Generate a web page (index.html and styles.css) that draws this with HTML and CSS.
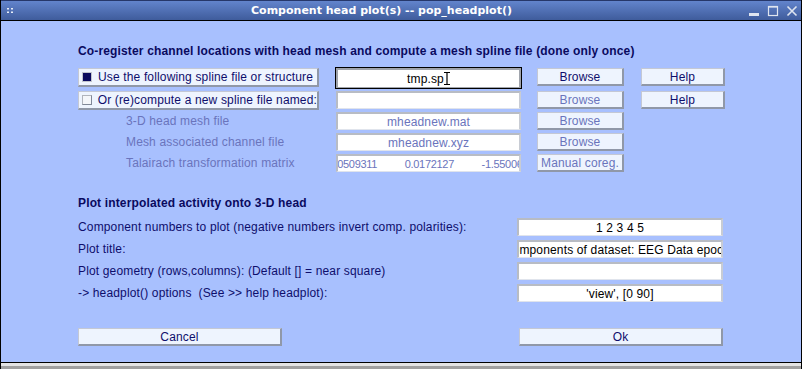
FILE: index.html
```html
<!DOCTYPE html>
<html lang="en">
<head>
    <meta charset="UTF-8">
    <title>Component head plot(s) -- pop_headplot()</title>
    <link rel="stylesheet" href="styles.css">
</head>
<body>
    <div class="window">
        <div class="titlebar">
            <svg class="grip" width="8" height="6" viewBox="0 0 8 6">
                <rect x="0" y="0" width="2" height="1.5" fill="#e8eef8"/>
                <rect x="4" y="0" width="2" height="1.5" fill="#e8eef8"/>
                <rect x="0" y="3.5" width="2" height="1.5" fill="#e8eef8"/>
                <rect x="4" y="3.5" width="2" height="1.5" fill="#e8eef8"/>
            </svg>
            <div class="title">Component head plot(s) -- pop_headplot()</div>
            <div class="controls">
                <svg width="12" height="12" viewBox="0 0 12 12"><rect x="1" y="8" width="10" height="3" fill="#dfe5f0"/></svg>
                <svg width="12" height="12" viewBox="0 0 12 12"><rect x="1.5" y="1.5" width="9" height="9" fill="none" stroke="#dfe5f0" stroke-width="1.2"/><rect x="1" y="1" width="10" height="1.6" fill="#dfe5f0"/></svg>
                <svg width="12" height="12" viewBox="0 0 12 12"><path d="M1.5 1.5 L10.5 10.5 M10.5 1.5 L1.5 10.5" stroke="#dfe5f0" stroke-width="1.6"/></svg>
            </div>
        </div>

        <div class="content">
            <div class="heading">Co-register channel locations with head mesh and compute a mesh spline file (done only once)</div>

            <div class="coreg">
                <div class="check"><span class="box on"></span>Use the following spline file or structure</div>
                <div class="edit focus">tmp.sp<svg class="ibeam" width="6" height="13" viewBox="0 0 6 13"><path d="M0 0.5 H6 M0 12.5 H6 M3 0.5 V12.5" stroke="#000" stroke-width="1.2"/></svg></div>
                <div class="btn">Browse</div>
                <div class="btn">Help</div>

                <div class="check"><span class="box"></span>Or (re)compute a new spline file named:</div>
                <div class="edit"></div>
                <div class="btn off">Browse</div>
                <div class="btn">Help</div>

                <div class="label off">3-D head mesh file</div>
                <div class="edit off">mheadnew.mat</div>
                <div class="btn off">Browse</div>
                <div></div>

                <div class="label off">Mesh associated channel file</div>
                <div class="edit off">mheadnew.xyz</div>
                <div class="btn off">Browse</div>
                <div></div>

                <div class="label off">Talairach transformation matrix</div>
                <div class="edit off matrix"><span>0.0509311          0.0172127          -1.550061</span></div>
                <div class="btn off">Manual coreg.</div>
                <div></div>
            </div>

            <div class="heading second">Plot interpolated activity onto 3-D head</div>

            <div class="plot">
                <div class="label">Component numbers to plot (negative numbers invert comp. polarities):</div>
                <div class="edit">1 2 3 4 5</div>
                <div class="label">Plot title:</div>
                <div class="edit"><span>Components of dataset: EEG Data epochs</span></div>
                <div class="label">Plot geometry (rows,columns): (Default [] = near square)</div>
                <div class="edit"></div>
                <div class="label">-&gt; headplot() options&nbsp;&nbsp;(See &gt;&gt; help headplot):</div>
                <div class="edit">'view', [0 90]</div>
            </div>

            <div class="actions">
                <div class="btn wide">Cancel</div>
                <div class="btn wide">Ok</div>
            </div>
        </div>
        <div class="bottom"></div>
    </div>
</body>
</html>
```

FILE: styles.css
```css
body{
    margin: 0;
    background-color: #a8c0fe;
    font-family: "Liberation Sans", Arial, sans-serif;
    font-size: 12px;
    letter-spacing: 0.15px;
    color: #0e0e6c;
}
.window{
    width: 802px;
    height: 369px;
    box-sizing: border-box;
    border-left: 1px solid #000;
    border-right: 1px solid #000;
    display: flex;
    flex-direction: column;
    overflow: hidden;
}
.titlebar{
    box-sizing: border-box;
    border-top: 1px solid #26376a;
    border-bottom: 1px solid #000;
    height: 21px;
    background: linear-gradient(#6284cc, #3f5c9c);
    display: flex;
    align-items: center;
    color: white;
}
.grip{
    margin-left: 6px;
    margin-top: 1px;
}
.title{
    flex: 1;
    text-align: center;
    font-family: "DejaVu Sans", sans-serif;
    font-weight: bold;
    font-size: 11px;
    letter-spacing: 0;
}
.controls{
    display: flex;
    gap: 7px;
    margin-right: 3px;
}
.content{
    flex: 1;
    padding: 23px 0 0 77px;
}
.heading{
    font-weight: bold;
    line-height: 14px;
    height: 14px;
    color: #0a0a5e;
    white-space: nowrap;
}
.heading.second{
    margin-top: 24px;
}
.coreg{
    margin-top: 10px;
    display: grid;
    grid-template-columns: 241px 185px 86px 84px;
    grid-template-rows: 20px 18px 18px 18px 18px;
    column-gap: 17px;
    row-gap: 3px;
}
.coreg > .btn:nth-child(4n+3){
    margin-left: -1px;
}
.check{
    background: #eef4fe;
    border-top: 1px solid #c4c8d4;
    border-left: 1px solid #c4c8d4;
    border-right: 2px solid #9098a8;
    border-bottom: 2px solid #9098a8;
    display: flex;
    align-items: center;
    white-space: nowrap;
    height: 19px;
    box-sizing: border-box;
}
.box{
    width: 8px;
    height: 8px;
    border: 1px solid #b0b4bc;
    border-right-color: #808898;
    border-bottom-color: #808898;
    background: #f4f6fa;
    margin: 0 6px 0 3px;
}
.box.on{
    background: #0a0a5e;
    border-color: #c0c4cc;
}
.label{
    display: flex;
    align-items: center;
    white-space: nowrap;
}
.coreg .label{
    padding-left: 48px;
}
.off{
    color: #6a74bc;
}
.edit{
    background: white;
    border-top: 2px solid #b8bcc4;
    border-left: 2px solid #b8bcc4;
    border-right: 2px solid #c8ccd4;
    border-bottom: 1px solid #e0e4ec;
    box-sizing: border-box;
    display: flex;
    align-items: center;
    justify-content: center;
    white-space: pre;
    overflow: hidden;
    color: #000;
}
.edit.off{
    color: #6a74bc;
}
.edit.matrix{
    font-size: 11px;
    letter-spacing: -0.3px;
}
.edit.focus{
    outline: 1px solid #000;
    border-color: #a0a4ac;
}
.btn{
    background: #eef4fe;
    border-top: 1px solid #c4c8d4;
    border-left: 1px solid #c4c8d4;
    border-right: 2px solid #9098a8;
    border-bottom: 2px solid #9098a8;
    box-sizing: border-box;
    display: flex;
    align-items: center;
    justify-content: center;
    white-space: nowrap;
    height: 18px;
}
.plot{
    margin-top: 8px;
    display: grid;
    grid-template-columns: 439px 206px;
    grid-auto-rows: 18px;
    row-gap: 4px;
}
.actions{
    margin-top: 26px;
    display: flex;
    gap: 237px;
}
.btn.wide{
    width: 204px;
}
.bottom{
    height: 6px;
    border-top: 1px solid #000;
    background: linear-gradient(#e4e4e4 0, #e4e4e4 3px, #a0a0a0 3px);
}
```
